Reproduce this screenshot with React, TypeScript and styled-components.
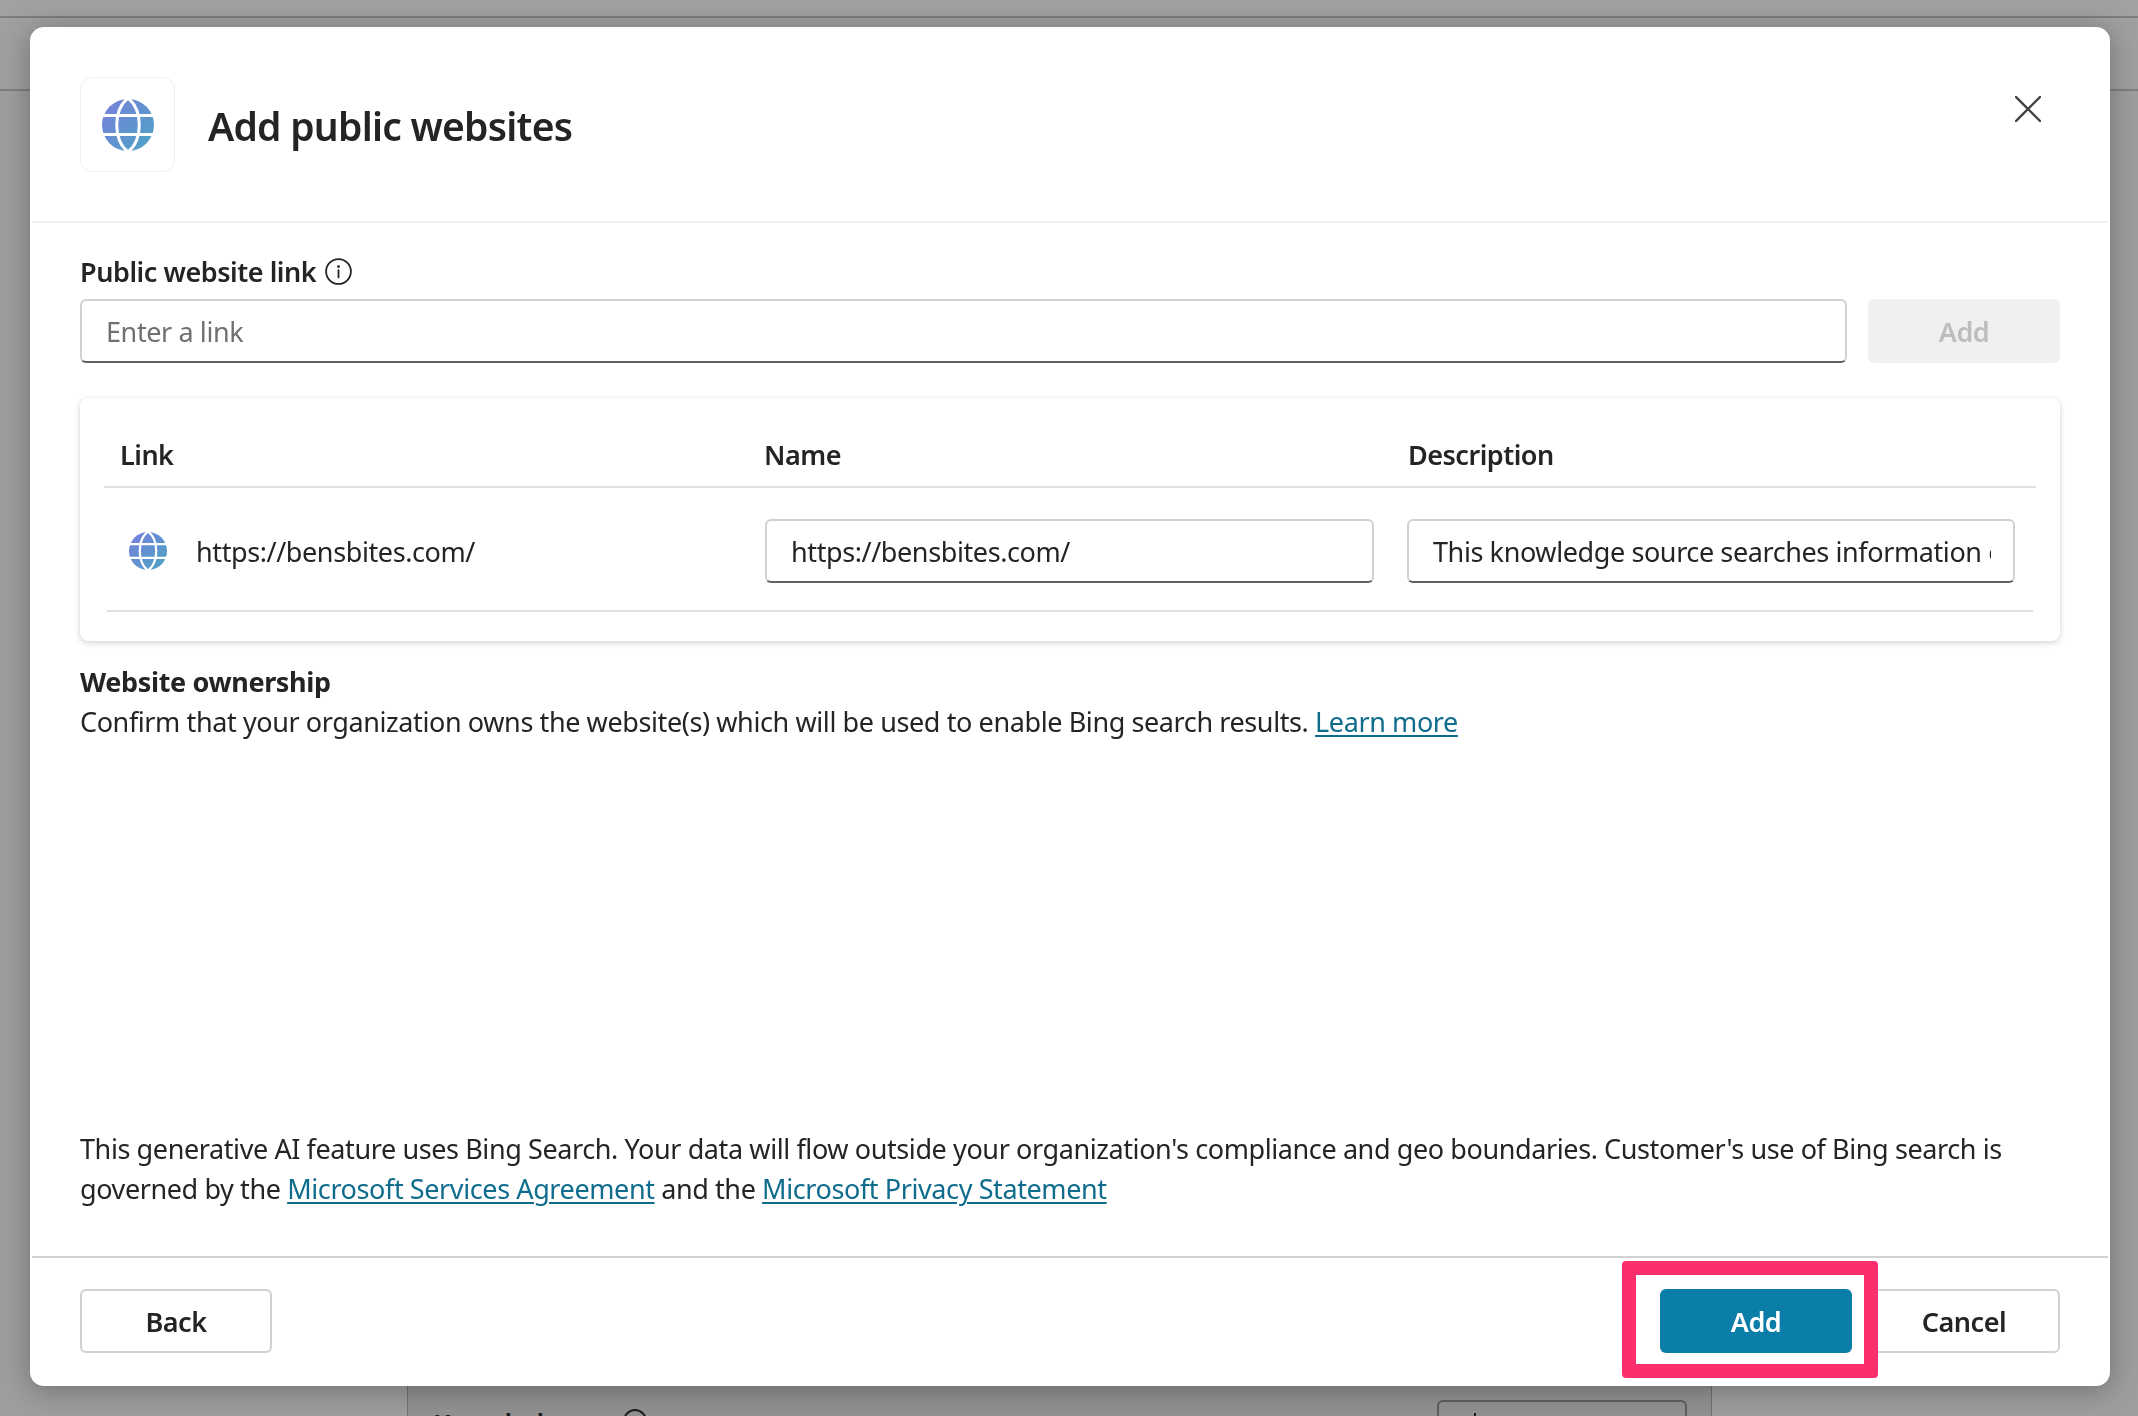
import React from "react";
import styled, { createGlobalStyle } from "styled-components";

const Global = createGlobalStyle`
  html, body { margin: 0; padding: 0; }
  body {
    width: 2138px;
    height: 1416px;
    overflow: hidden;
    font-family: "Noto Sans", "Open Sans", "Liberation Sans", sans-serif;
    color: #242424;
    background: #9d9e9f;
  }
`;

const Page = styled.div`
  width: 2138px;
  height: 1416px;
  display: flex;
  flex-direction: column;
  background: #9d9e9f;
`;

const TopBar = styled.div`
  height: 16px;
  flex: none;
  background: #a1a1a1;
  border-bottom: 2px solid #7d7d7d;
`;

const SubBar = styled.div`
  height: 71px;
  flex: none;
  background: #a0a0a0;
  border-bottom: 2px solid #7f7f7f;
`;

const PageBody = styled.div`
  flex: 1;
  display: flex;
  justify-content: flex-start;
  padding-left: 407px;
`;

const CenterPanel = styled.div`
  width: 1305px;
  box-sizing: border-box;
  border-left: 1px solid #727272;
  border-right: 1px solid #727272;
  background: #929292;
  display: flex;
  flex-direction: column;
  justify-content: flex-end;
`;

const PanelRow = styled.div`
  height: 16px;
  display: flex;
  justify-content: space-between;
  padding: 0 24px 0 25px;
  overflow: hidden;
`;

const PanelLabel = styled.span`
  font-size: 27px;
  font-weight: 600;
  line-height: 30px;
  margin-top: 9px;
  letter-spacing: -0.4px;
  color: #1e1e1e;
  display: flex;
  gap: 47px;
  align-items: flex-start;
`;

const PanelInfo = styled.span`
  width: 24px;
  height: 24px;
  border: 2px solid #1e1e1e;
  border-radius: 50%;
  box-sizing: border-box;
`;

const PanelBox = styled.div`
  width: 250px;
  height: 40px;
  box-sizing: border-box;
  border: 2px solid #5f5f5f;
  border-radius: 6px;
  padding: 11px 0 0 35px;
`;

const PanelTick = styled.div`
  width: 2px;
  height: 12px;
  background: #1e1e1e;
`;

const Overlay = styled.div`
  position: fixed;
  inset: 0;
  padding: 27px 28px 30px 30px;
  box-sizing: border-box;
  display: flex;
`;

const Modal = styled.div`
  position: relative;
  flex: 1;
  background: #fff;
  border-radius: 14px;
  box-shadow: 0 4px 30px rgba(0, 0, 0, 0.3);
  display: flex;
  flex-direction: column;
`;

const Header = styled.header`
  height: 196px;
  flex: none;
  box-sizing: border-box;
  margin: 0 2px;
  padding: 50px 67px 0 48px;
  display: flex;
  align-items: flex-start;
  gap: 33px;
  border-bottom: 2px solid #f0f0f0;
`;

const IconTile = styled.div`
  width: 95px;
  height: 95px;
  flex: none;
  box-sizing: border-box;
  border: 1.5px solid #f0f0f0;
  border-radius: 12px;
  display: flex;
  align-items: center;
  justify-content: center;
`;

const Title = styled.h1`
  margin: 1px 0 0;
  flex: 1;
  font-size: 39px;
  line-height: 95px;
  font-weight: 600;
  letter-spacing: -0.75px;
  color: #242424;
`;

const CloseButton = styled.button`
  width: 26px;
  height: 26px;
  padding: 0;
  margin-top: 19px;
  border: none;
  background: none;
  display: flex;
`;

const Main = styled.main`
  flex: 1;
  display: flex;
  flex-direction: column;
  padding: 0 50px;
  min-height: 0;
`;

const FieldLabel = styled.div`
  margin-top: 28px;
  height: 40px;
  display: flex;
  align-items: center;
  gap: 9px;
  font-size: 27px;
  font-weight: 600;
  letter-spacing: -0.45px;
  color: #242424;
`;

const InputRow = styled.div`
  margin-top: 8px;
  display: flex;
  gap: 21px;
`;

const TextInput = styled.div<{ $placeholder?: boolean }>`
  flex: 1;
  min-width: 0;
  height: 64px;
  box-sizing: border-box;
  padding: 0 24px;
  background: #fff;
  border: 2px solid #d1d1d1;
  border-bottom-color: #616161;
  border-radius: 6px;
  display: flex;
  align-items: center;
  overflow: hidden;
  white-space: nowrap;
  font-size: 27px;
  letter-spacing: -0.4px;
  color: ${(p) => (p.$placeholder ? "#707070" : "#242424")};
`;

const RowInput = styled(TextInput)`
  padding-top: 2px;
`;

const DescriptionInput = styled(RowInput)`
  margin-left: 33px;
  padding-right: 22px;
`;

const ClipText = styled.span`
  display: block;
  overflow: hidden;
  white-space: nowrap;
  flex: 1;
  min-width: 0;
`;

const DisabledButton = styled.button`
  width: 192px;
  height: 64px;
  flex: none;
  border: none;
  border-radius: 6px;
  background: #f0f0f0;
  color: #bdbdbd;
  font: 600 27px "Noto Sans", sans-serif;
  letter-spacing: -0.45px;
`;

const Card = styled.section`
  margin-top: 35px;
  height: 243px;
  flex: none;
  box-sizing: border-box;
  border-radius: 8px;
  background: #fff;
  box-shadow: 0 2px 6px rgba(0, 0, 0, 0.16), 0 0 3px rgba(0, 0, 0, 0.05);
  padding: 0 24px;
  display: flex;
  flex-direction: column;
`;

const HeadRow = styled.div`
  height: 90px;
  flex: none;
  box-sizing: border-box;
  padding: 26px 16px 0;
  display: grid;
  grid-template-columns: 644px 644px 1fr;
  align-items: center;
  border-bottom: 2px solid #e0e0e0;
`;

const HeadCell = styled.div`
  font-size: 27px;
  font-weight: 600;
  letter-spacing: -0.5px;
  color: #242424;
  line-height: 40px;
`;

const DataRow = styled.div`
  height: 124px;
  flex: none;
  box-sizing: border-box;
  margin: 0 3px;
  padding: 3px 18px 0 22px;
  display: grid;
  grid-template-columns: 636px 609px 1fr;
  align-items: center;
  border-bottom: 2px solid #e0e0e0;
`;

const LinkCell = styled.div`
  display: flex;
  align-items: center;
  gap: 29px;
  font-size: 27px;
  letter-spacing: -0.4px;
  color: #242424;
`;

const LinkText = styled.span`
  padding-top: 2px;
`;

const Section = styled.div`
  margin-top: 21px;
`;

const SectionTitle = styled.div`
  font-size: 27px;
  font-weight: 700;
  line-height: 40px;
  letter-spacing: -0.35px;
  color: #242424;
`;

const Paragraph = styled.p`
  margin: 0;
  font-size: 27px;
  line-height: 40px;
  letter-spacing: -0.4px;
  color: #242424;
`;

const Notice = styled(Paragraph)`
  margin-top: auto;
  margin-bottom: 47px;
`;

const Anchor = styled.a`
  color: #0f6c8c;
  text-decoration: underline;
  text-underline-offset: 3px;
  text-decoration-thickness: 1.5px;
`;

const Footer = styled.footer`
  height: 130px;
  flex: none;
  box-sizing: border-box;
  margin: 0 2px;
  padding: 31px 48px 0;
  display: flex;
  align-items: flex-start;
  border-top: 2px solid #d1d1d1;
`;

const FooterGap = styled.div`
  flex: 1;
`;

const FooterActions = styled.div`
  display: flex;
  gap: 16px;
`;

const OutlineButton = styled.button`
  width: 192px;
  height: 64px;
  box-sizing: border-box;
  background: #fff;
  border: 2px solid #d1d1d1;
  border-radius: 6px;
  color: #242424;
  font: 600 27px "Noto Sans", sans-serif;
  letter-spacing: -0.45px;
`;

const PrimaryButton = styled.button`
  width: 192px;
  height: 64px;
  border: none;
  border-radius: 6px;
  background: #0a7ea9;
  color: #fff;
  font: 600 27px "Noto Sans", sans-serif;
  letter-spacing: -0.45px;
`;

const Callout = styled.div`
  position: absolute;
  left: 1592px;
  top: 1234px;
  width: 256px;
  height: 117px;
  box-sizing: border-box;
  border: 14px solid #fb2f6b;
  border-radius: 4px;
  pointer-events: none;
`;

const Globe: React.FC<{ size: number; id: string }> = ({ size, id }) => (
  <svg width={size} height={size} viewBox="0 0 52 52" aria-hidden="true">
    <defs>
      <linearGradient id={id} x1="0" y1="0" x2="1" y2="1">
        <stop offset="0" stopColor="#7a7fdc" />
        <stop offset="1" stopColor="#4aa5c4" />
      </linearGradient>
    </defs>
    <circle cx="26" cy="26" r="26" fill={`url(#${id})`} />
    <path d="M26 -1C11 11 11 41 26 53C41 41 41 11 26 -1Z" fill="none" stroke="#fff" strokeWidth="3" />
    <path d="M0 16.5H52M0 35.5H52" stroke="#fff" strokeWidth="3" />
  </svg>
);

const InfoIcon = () => (
  <svg width="27" height="27" viewBox="0 0 27 27" aria-hidden="true">
    <circle cx="13.5" cy="13.5" r="12.4" fill="none" stroke="#242424" strokeWidth="1.8" />
    <circle cx="13.5" cy="8.6" r="1.4" fill="#242424" />
    <path d="M13.5 12.2V19.4" stroke="#242424" strokeWidth="1.8" strokeLinecap="round" />
  </svg>
);

const CloseIcon = () => (
  <svg width="26" height="26" viewBox="0 0 26 26" aria-hidden="true">
    <path d="M1 1L25 25M25 1L1 25" stroke="#424242" strokeWidth="2.4" strokeLinecap="round" />
  </svg>
);

export default function App() {
  return (
    <>
      <Global />
      <Page>
        <TopBar />
        <SubBar />
        <PageBody>
          <CenterPanel>
            <PanelRow>
              <PanelLabel>Knowledge<PanelInfo /></PanelLabel>
              <PanelBox><PanelTick /></PanelBox>
            </PanelRow>
          </CenterPanel>
        </PageBody>
      </Page>
      <Overlay>
        <Modal>
          <Header>
            <IconTile><Globe size={52} id="globe-large" /></IconTile>
            <Title>Add public websites</Title>
            <CloseButton aria-label="Close"><CloseIcon /></CloseButton>
          </Header>
          <Main>
            <FieldLabel>Public website link <InfoIcon /></FieldLabel>
            <InputRow>
              <TextInput $placeholder>Enter a link</TextInput>
              <DisabledButton>Add</DisabledButton>
            </InputRow>
            <Card>
              <HeadRow>
                <HeadCell>Link</HeadCell>
                <HeadCell>Name</HeadCell>
                <HeadCell>Description</HeadCell>
              </HeadRow>
              <DataRow>
                <LinkCell><Globe size={38} id="globe-small" /><LinkText>https://bensbites.com/</LinkText></LinkCell>
                <RowInput>https://bensbites.com/</RowInput>
                <DescriptionInput><ClipText>This knowledge source searches information on https://bensbites.com/</ClipText></DescriptionInput>
              </DataRow>
            </Card>
            <Section>
              <SectionTitle>Website ownership</SectionTitle>
              <Paragraph>
                Confirm that your organization owns the website(s) which will be used to enable Bing search results. <Anchor>Learn more</Anchor>
              </Paragraph>
            </Section>
            <Notice>
              This generative AI feature uses Bing Search. Your data will flow outside your organization's compliance and geo boundaries. Customer's use of Bing search is governed by the <Anchor>Microsoft Services Agreement</Anchor> and the <Anchor>Microsoft Privacy Statement</Anchor>
            </Notice>
          </Main>
          <Footer>
            <OutlineButton>Back</OutlineButton>
            <FooterGap />
            <FooterActions>
              <PrimaryButton>Add</PrimaryButton>
              <OutlineButton>Cancel</OutlineButton>
            </FooterActions>
          </Footer>
          <Callout />
        </Modal>
      </Overlay>
    </>
  );
}
